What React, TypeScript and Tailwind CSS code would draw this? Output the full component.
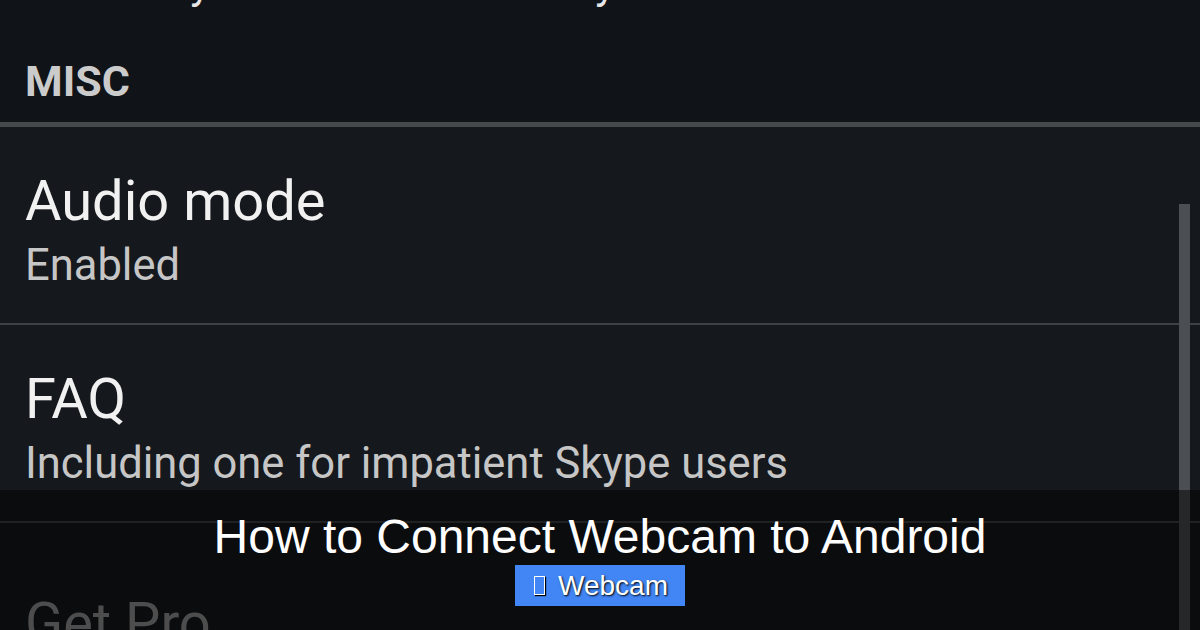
import React from "react";

const roboto = { fontFamily: "Roboto, 'Noto Sans', sans-serif" };

function PrefItem({ title, summary }: { title: string; summary?: string }) {
  return (
    <div className="h-[198px] shrink-0 border-b-2 border-[#3f4245] pl-[25px] pt-[46px]">
      <div className="text-[56px] leading-[56px] text-[#f1f1f1]">{title}</div>
      {summary && <div className="mt-[15px] text-[43.5px] leading-[43px] text-[#c6c6c6]">{summary}</div>}
    </div>
  );
}

export default function App() {
  return (
    <div className="relative flex h-[630px] w-[1200px] flex-col overflow-hidden bg-[#15181c]" style={roboto}>
      {/* category header, with the tail of the previous preference above it */}
      <div className="flex h-[122px] shrink-0 flex-col bg-[#101317] pl-[25px]">
        <div className="mt-[-38px] whitespace-nowrap text-[43px] leading-[42px] text-[#e6e6e6]">
          Then only for the calls with any of them
        </div>
        <div className="mt-[55px] text-[43px] font-bold leading-[44px] text-[#cbcbcb]">MISC</div>
      </div>
      <div className="h-[5px] shrink-0 bg-[#46494c]" />

      <PrefItem title="Audio mode" summary="Enabled" />
      <PrefItem title="FAQ" summary="Including one for impatient Skype users" />
      <div className="shrink-0 pl-[25px] pt-[72px]">
        <div className="text-[56px] leading-[56px] text-[#9a9a9a]">Get Pro</div>
      </div>

      {/* scrollbar thumb */}
      <div className="absolute bottom-0 left-[1179px] top-[204px] w-[11px] bg-[#4b4e52]" />

      {/* caption banner */}
      <div
        className="absolute inset-x-0 bottom-0 top-[490px] flex flex-col items-center bg-black/50 pt-[23px]"
        style={{ fontFamily: "'Liberation Sans', Arial, sans-serif" }}
      >
        <div className="text-[48px] leading-[48px] text-white">How to Connect Webcam to Android</div>
        <div className="mt-[4px] flex h-[41px] items-center gap-[13px] bg-[#4285f4] pl-[19px] pr-[17px]">
          <span className="inline-block h-[19px] w-[11px] border-[1.5px] border-white shadow-[1px_1px_1px_#000]" />
          <span className="text-[28px] leading-[28px] text-white [text-shadow:1px_1px_2px_#000]">Webcam</span>
        </div>
      </div>
    </div>
  );
}
